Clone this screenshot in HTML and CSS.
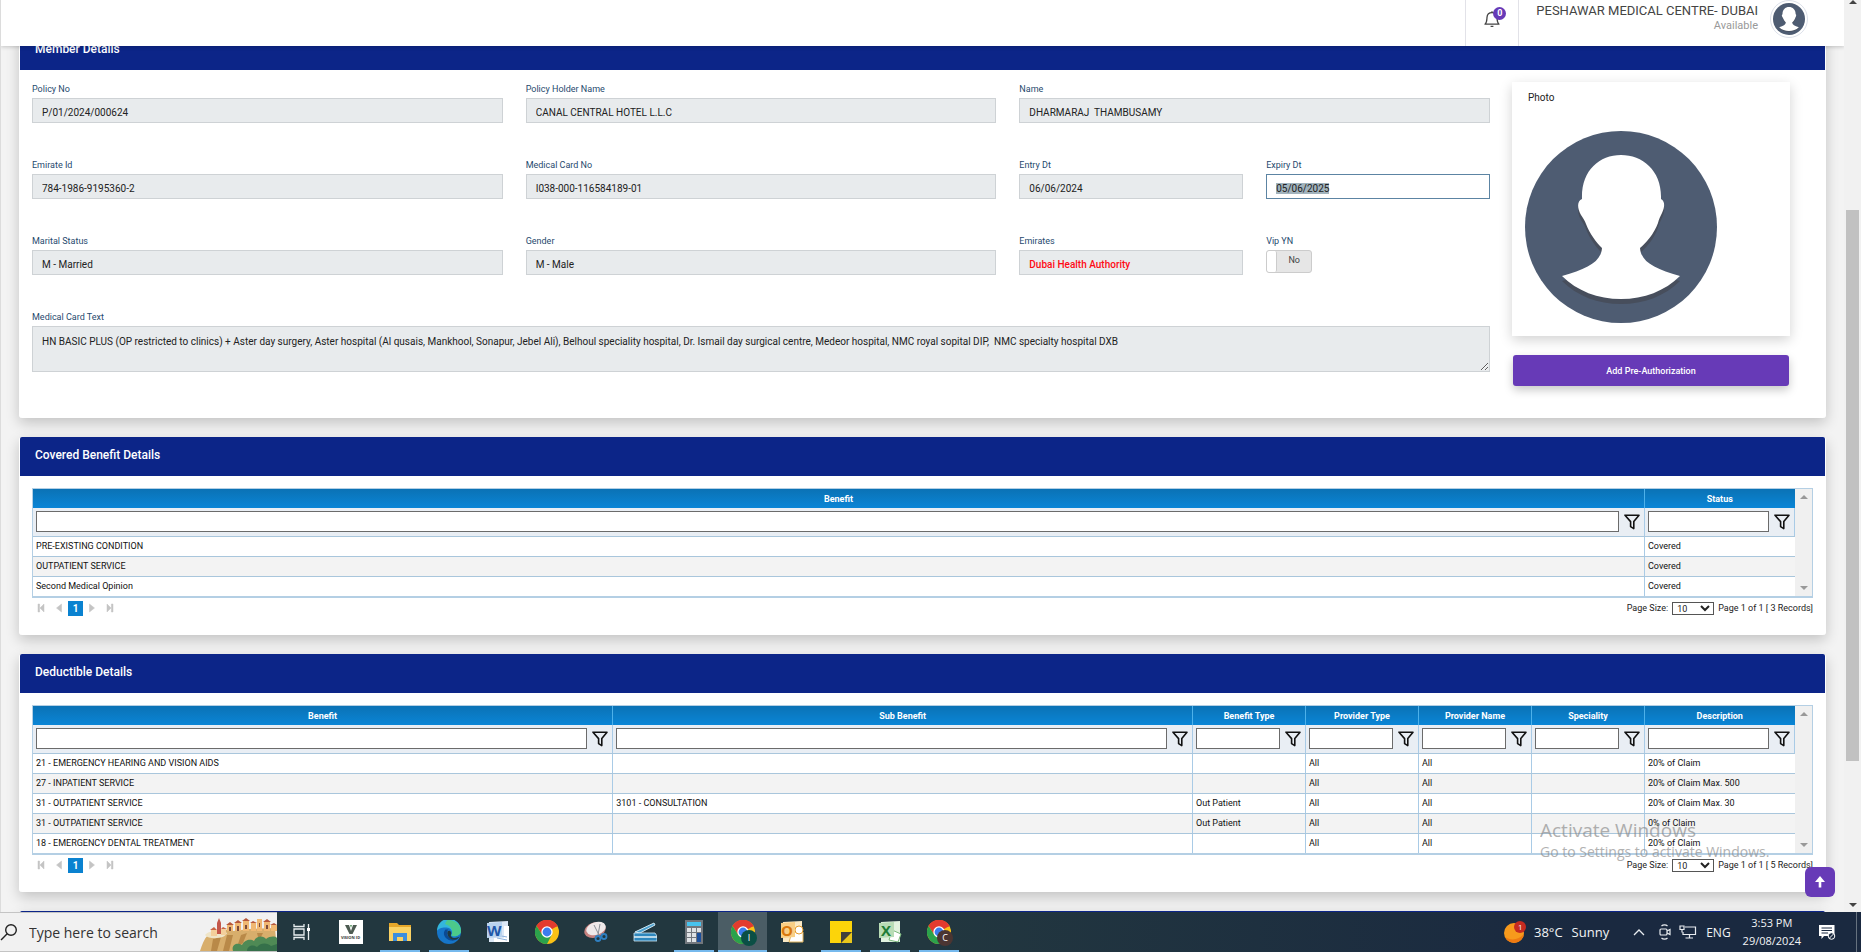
FILE: index.html
```html
<!DOCTYPE html>
<html lang="en">
<head>
<meta charset="utf-8">
<title>Member Details</title>
<link rel="stylesheet" href="styles.css">
</head>
<body>
<svg class="defs" aria-hidden="true">
  <symbol id="avatar" viewBox="0 0 192 192">
    <circle cx="96" cy="96" r="96" fill="#4e5c72"/>
    <path transform="translate(0 5)" fill="#474e5c" d="M57 68C56 40 74 24 96 24S137 40 136 68C140 70 140 76 137 82C135 86 134 88 133 92C129 103 121 112 115 117C116 131 130 138 155 145C140 160 119 168 96 168S52 160 37 145C62 138 76 131 77 117C71 111 65 103 61 93C60 90 58 87 56 84C52 77 52 70 57 68Z"/>
    <path fill="#fff" d="M57 68C56 40 74 24 96 24S137 40 136 68C140 70 140 76 137 82C135 86 134 88 133 92C129 103 121 112 115 117C116 131 130 138 155 145C140 160 119 168 96 168S52 160 37 145C62 138 76 131 77 117C71 111 65 103 61 93C60 90 58 87 56 84C52 77 52 70 57 68Z"/>
  </symbol>
  <symbol id="funnel" viewBox="0 0 16 16"><path d="M1 1.2H15L9.8 7.6V14.6L6.6 12.6V7.6Z" fill="none" stroke="#111" stroke-width="1.6" stroke-linejoin="round"/></symbol>
  <symbol id="chrome" viewBox="0 0 24 24">
    <circle cx="12" cy="12" r="12" fill="#fbc116"/>
    <path d="M12 12L1.6 6A12 12 0 0 1 22.4 6Z" fill="#e33b2e"/>
    <path d="M12 6.5H22.7A12 12 0 0 0 1.6 6L7.2 14.8Z" fill="#e33b2e"/>
    <path d="M1.6 6A12 12 0 0 0 12 24L16.8 14.8L7.2 14.8Z" fill="#2ba24c"/>
    <circle cx="12" cy="12" r="5.7" fill="#fff"/><circle cx="12" cy="12" r="4.4" fill="#3b7ded"/>
  </symbol>
  <symbol id="first" viewBox="0 0 8 10"><path d="M1 1H2.6V9H1ZM7 1V9L3 5Z" fill="#c4c4c4" stroke="#c4c4c4" stroke-width=".5"/></symbol>
  <symbol id="prev" viewBox="0 0 8 10"><path d="M6.5 1V9L1.5 5Z" fill="#c4c4c4" stroke="#c4c4c4" stroke-width=".5"/></symbol>
  <symbol id="next" viewBox="0 0 8 10"><path d="M1.5 1V9L6.5 5Z" fill="#c4c4c4" stroke="#c4c4c4" stroke-width=".5"/></symbol>
  <symbol id="last" viewBox="0 0 8 10"><path d="M7 1H5.4V9H7ZM1 1V9L5 5Z" fill="#c4c4c4" stroke="#c4c4c4" stroke-width=".5"/></symbol>
</svg>

<div class="window">
  <div class="page">
    <header class="topbar">
      <button class="bell" type="button" aria-label="Notifications">
        <svg width="16" height="18" viewBox="0 0 16 18" fill="none" stroke="#444" stroke-width="1.3"><path d="M1 14.2C3 12.6 2.8 10 3 7.4C3.2 4.6 5.2 2.7 8 2.7S12.8 4.6 13 7.4C13.2 10 13 12.6 15 14.2Z" stroke-linejoin="round"/><path d="M6.6 16.3H9.4M8 1.3V2.5"/></svg>
        <span class="badge">0</span>
      </button>
      <a class="account" href="#">
        <span class="account-text"><span class="account-name">PESHAWAR MEDICAL CENTRE- DUBAI</span><span class="account-state">Available</span></span>
        <span class="account-pic"><svg width="32" height="32"><use href="#avatar"/></svg></span>
      </a>
    </header>

    <main class="content">
      <section class="card">
        <h2 class="card-head">Member Details</h2>
        <div class="member">
          <form class="fields">
            <div class="field wide"><label for="policy">Policy No</label><input id="policy" value="P/01/2024/000624" readonly></div>
            <div class="field wide"><label for="holder">Policy Holder Name</label><input id="holder" value="CANAL CENTRAL HOTEL L.L.C" readonly></div>
            <div class="field wide"><label for="name">Name</label><input id="name" value="DHARMARAJ  THAMBUSAMY" readonly></div>
            <div class="field wide"><label for="eid">Emirate Id</label><input id="eid" value="784-1986-9195360-2" readonly></div>
            <div class="field wide"><label for="cardno">Medical Card No</label><input id="cardno" value="I038-000-116584189-01" readonly></div>
            <div class="field"><label for="entry">Entry Dt</label><input id="entry" value="06/06/2024" readonly></div>
            <div class="field"><label for="expiry">Expiry Dt</label><input id="expiry" class="active" value="05/06/2025"></div>
            <div class="field wide"><label for="marital">Marital Status</label><input id="marital" value="M - Married" readonly></div>
            <div class="field wide"><label for="gender">Gender</label><input id="gender" value="M - Male" readonly></div>
            <div class="field"><label for="emirates">Emirates</label><input id="emirates" class="alert" value="Dubai Health Authority" readonly></div>
            <div class="field"><label for="vip">Vip YN</label>
              <span class="toggle"><input id="vip" type="checkbox"><span class="knob"></span><span class="toggle-text">No</span></span>
            </div>
            <div class="field full"><label for="cardtext">Medical Card Text</label><textarea id="cardtext" readonly>HN BASIC PLUS (OP restricted to clinics) + Aster day surgery, Aster hospital (Al qusais, Mankhool, Sonapur, Jebel Ali), Belhoul speciality hospital, Dr. Ismail day surgical centre, Medeor hospital, NMC royal sopital DIP,  NMC specialty hospital DXB</textarea></div>
          </form>
          <aside class="side">
            <div class="photo"><span>Photo</span><svg width="192" height="192" role="img" aria-label="Photo"><use href="#avatar"/></svg></div>
            <button class="primary" type="button">Add Pre-Authorization</button>
          </aside>
        </div>
      </section>

      <section class="card">
        <h2 class="card-head">Covered Benefit Details</h2>
        <div class="grid-wrap">
          <div class="grid">
            <div class="grid-body">
            <table>
              <colgroup><col><col class="c-last"></colgroup>
              <thead>
                <tr><th>Benefit</th><th>Status</th></tr>
                <tr class="filters">
                  <td><div class="filter"><input aria-label="Filter Benefit"><button type="button" aria-label="Filter"><svg width="16" height="16"><use href="#funnel"/></svg></button></div></td>
                  <td><div class="filter"><input aria-label="Filter Status"><button type="button" aria-label="Filter"><svg width="16" height="16"><use href="#funnel"/></svg></button></div></td>
                </tr>
              </thead>
              <tbody>
                <tr><td>PRE-EXISTING CONDITION</td><td>Covered</td></tr>
                <tr><td>OUTPATIENT SERVICE</td><td>Covered</td></tr>
                <tr><td>Second Medical Opinion</td><td>Covered</td></tr>
              </tbody>
            </table>
            </div>
            <div class="gutter"><i class="up"></i><i class="down"></i></div>
          </div>
          <div class="pager">
            <button type="button" aria-label="First"><svg width="8" height="10"><use href="#first"/></svg></button>
            <button type="button" aria-label="Previous"><svg width="8" height="10"><use href="#prev"/></svg></button>
            <a class="current" href="#">1</a>
            <button type="button" aria-label="Next"><svg width="8" height="10"><use href="#next"/></svg></button>
            <button type="button" aria-label="Last"><svg width="8" height="10"><use href="#last"/></svg></button>
            <label for="size1">Page Size:</label><select id="size1"><option>10</option></select><span>Page 1 of 1 [ 3 Records]</span>
          </div>
        </div>
      </section>

      <section class="card">
        <h2 class="card-head">Deductible Details</h2>
        <div class="grid-wrap">
          <div class="grid">
            <div class="grid-body">
            <table>
              <colgroup><col><col><col class="c-mid"><col class="c-mid"><col class="c-mid"><col class="c-mid"><col class="c-last"></colgroup>
              <thead>
                <tr><th>Benefit</th><th>Sub Benefit</th><th>Benefit Type</th><th>Provider Type</th><th>Provider Name</th><th>Speciality</th><th>Description</th></tr>
                <tr class="filters">
                  <td><div class="filter"><input aria-label="Filter Benefit"><button type="button" aria-label="Filter"><svg width="16" height="16"><use href="#funnel"/></svg></button></div></td>
                  <td><div class="filter"><input aria-label="Filter Sub Benefit"><button type="button" aria-label="Filter"><svg width="16" height="16"><use href="#funnel"/></svg></button></div></td>
                  <td><div class="filter"><input aria-label="Filter Benefit Type"><button type="button" aria-label="Filter"><svg width="16" height="16"><use href="#funnel"/></svg></button></div></td>
                  <td><div class="filter"><input aria-label="Filter Provider Type"><button type="button" aria-label="Filter"><svg width="16" height="16"><use href="#funnel"/></svg></button></div></td>
                  <td><div class="filter"><input aria-label="Filter Provider Name"><button type="button" aria-label="Filter"><svg width="16" height="16"><use href="#funnel"/></svg></button></div></td>
                  <td><div class="filter"><input aria-label="Filter Speciality"><button type="button" aria-label="Filter"><svg width="16" height="16"><use href="#funnel"/></svg></button></div></td>
                  <td><div class="filter"><input aria-label="Filter Description"><button type="button" aria-label="Filter"><svg width="16" height="16"><use href="#funnel"/></svg></button></div></td>
                </tr>
              </thead>
              <tbody>
                <tr><td>21 - EMERGENCY HEARING AND VISION AIDS</td><td></td><td></td><td>All</td><td>All</td><td></td><td>20% of Claim</td></tr>
                <tr><td>27 - INPATIENT SERVICE</td><td></td><td></td><td>All</td><td>All</td><td></td><td>20% of Claim Max. 500</td></tr>
                <tr><td>31 - OUTPATIENT SERVICE</td><td>3101 - CONSULTATION</td><td>Out Patient</td><td>All</td><td>All</td><td></td><td>20% of Claim Max. 30</td></tr>
                <tr><td>31 - OUTPATIENT SERVICE</td><td></td><td>Out Patient</td><td>All</td><td>All</td><td></td><td>0% of Claim</td></tr>
                <tr><td>18 - EMERGENCY DENTAL TREATMENT</td><td></td><td></td><td>All</td><td>All</td><td></td><td>20% of Claim</td></tr>
              </tbody>
            </table>
            </div>
            <div class="gutter"><i class="up"></i><i class="down"></i></div>
          </div>
          <div class="pager">
            <button type="button" aria-label="First"><svg width="8" height="10"><use href="#first"/></svg></button>
            <button type="button" aria-label="Previous"><svg width="8" height="10"><use href="#prev"/></svg></button>
            <a class="current" href="#">1</a>
            <button type="button" aria-label="Next"><svg width="8" height="10"><use href="#next"/></svg></button>
            <button type="button" aria-label="Last"><svg width="8" height="10"><use href="#last"/></svg></button>
            <label for="size2">Page Size:</label><select id="size2"><option>10</option></select><span>Page 1 of 1 [ 5 Records]</span>
          </div>
        </div>
      </section>

      <section class="card"><div class="card-head"></div></section>
    </main>

    <div class="watermark"><p class="wm-title">Activate Windows</p><p class="wm-text">Go to Settings to activate Windows.</p></div>
    <a class="to-top" href="#" aria-label="Scroll to top"><svg width="12" height="14" viewBox="0 0 12 14"><path d="M6 1L11 7H7.3V12.5H4.7V7H1Z" fill="#fff"/></svg></a>
  </div>
  <div class="scrollbar"><i class="up"></i><span class="before"></span><span class="thumb"></span><span class="after"></span><i class="down"></i></div>
</div>

<footer class="taskbar">
  <label class="search">
    <svg width="18" height="18" viewBox="0 0 18 18" fill="none" stroke="#222" stroke-width="1.4"><circle cx="11" cy="7" r="5.3"/><path d="M7.2 10.8L1 17"/></svg>
    <input type="text" placeholder="Type here to search" aria-label="Search">
    <svg class="town" width="78" height="34" viewBox="0 0 78 34">
      <path d="M1 34C3 28 5 22 9 18L14 21L24 12L34 14L50 12L76 11L78 34Z" fill="#d8ae6c"/>
      <path d="M14 22L12 34H18L22 20ZM28 18L24 34H30L34 18ZM42 18L38 30L44 26L48 16ZM58 16L60 24L64 16Z" fill="#b98948"/>
      <path d="M6 18C10 13 24 12 28 16C26 22 10 23 6 18Z" fill="#efe5c8"/>
      <path d="M18 17V6L20 1L22 6V17Z" fill="#c4564a"/><path d="M12 13H18V19H12ZM22 12H27V18H22Z" fill="#f3cf9b"/><path d="M11 13L15 10L18 13ZM22 12L24 10L28 12Z" fill="#c96543"/>
      <path d="M28 8H34V14H28ZM36 6H42V14H36ZM44 4H50V14H44ZM52 6H57V14H52ZM58 2H63V14H58ZM65 5H71V14H65ZM72 8H78V14H72Z" fill="#f0b873"/>
      <path d="M27 8L31 5L35 8ZM35 6L39 3L43 6ZM43 4L47 1L51 4ZM51 6L54 4L58 6ZM64 5L68 2L72 5ZM71 8L75 6L78 8Z" fill="#b6573b"/>
      <path d="M30 10H32V14H30ZM38 9H40V14H38ZM46 8H48V12H46ZM60 6H61V10H60ZM67 8H69V12H67Z" fill="#7c4a3a"/>
      <path d="M34 34C32 28 38 25 43 28C46 22 52 22 55 24C58 18 65 19 67 22C71 19 76 19 78 21V34Z" fill="#4f8a55"/>
      <path d="M48 34C48 29 54 27 58 30C62 25 69 26 72 29L78 27V34Z" fill="#35704a"/>
    </svg>
  </label>

  <nav class="apps">
    <a href="#" aria-label="Task view"><svg width="20" height="18" viewBox="0 0 20 18" fill="none" stroke="#e8eef0" stroke-width="1.3"><path d="M2 1V3.5H12V1M2 17V14.5H12V17M2 6H12V12H2ZM16.5 1V17"/><path d="M15 5H18V8H15Z" fill="#fff" stroke="none"/></svg></a>
    <a href="#" aria-label="Vision ID" class="vision"><svg width="16" height="11" viewBox="0 0 16 11"><path d="M2 1H6L8 7L10 1H14L9.5 10H6.5Z" fill="#4d5b52"/><path d="M7 1H9L8 4Z" fill="#5c9a66"/></svg><span>VISION ID</span></a>
    <a href="#" class="open" aria-label="File Explorer"><svg width="24" height="24" viewBox="0 0 24 24"><path d="M1 3H9L11 5H23V21H1Z" fill="#e5a72a"/><path d="M1 7H23V21H1Z" fill="#fad264"/><path d="M5 21V13H19V21H15V17H9V21Z" fill="#3c8ede"/></svg></a>
    <a href="#" class="open" aria-label="Edge"><svg width="24" height="24" viewBox="0 0 24 24"><circle cx="12" cy="12" r="12" fill="#1675c8"/><path d="M0 11A12 12 0 0 1 24 10.5C24.4 16 17 17.5 14.3 15.5C16.5 12 14 8 9.5 7.6C5 7.2 1 9 0 11Z" fill="#33b6dc"/><path d="M10 0.2A12 12 0 0 1 24 10.5C24.4 16 17 17.5 14.3 15.5C16.5 12 15 6 8 4Z" fill="#4cc98a"/><path d="M8.5 9.5C5 13 7.500 19.500 14 20.500C17 21 20 20 22.500 17.600C19 21 9.500 19 10 12.500C10.100 11 10.700 10.200 11.500 9.500Z" fill="#0b4a94"/><path d="M10.500 11.500C12 9.500 15.300 11.500 14 14.500C13.400 16 14.500 18 18 18C20 18 22 17 22.700 16.300C21 20 17 20.500 14 19C11 17.500 9.800 14 10.500 11.500Z" fill="#22373f"/></svg></a>
    <a href="#" aria-label="Word"><svg width="24" height="24" viewBox="0 0 24 24"><path d="M3 2L22 1V22L3 22Z" fill="#dce8f6"/><path d="M18 6H23V22H8V18H18Z" fill="#fff"/><path d="M10 15L21 17M11 18L21 20" stroke="#8ab0dc"/><path d="M1 3L16 2V17L1 18Z" fill="#b9d2ee"/></svg><b class="glyph word">W</b></a>
    <a href="#" aria-label="Chrome"><svg width="24" height="24"><use href="#chrome"/></svg></a>
    <a href="#" aria-label="Snipping Tool"><svg width="24" height="24" viewBox="0 0 24 24"><ellipse cx="11" cy="10" rx="11" ry="7.5" transform="rotate(-18 11 10)" fill="#c7827f"/><ellipse cx="12" cy="8.5" rx="10" ry="6.3" transform="rotate(-18 12 8.5)" fill="#efe9ea"/><path d="M10 5L15 15M16 4L14 15" stroke="#8a8f96"/><g fill="none" stroke="#2f7fc0" stroke-width="1.8"><circle cx="14" cy="18.5" r="2.5"/><circle cx="20" cy="16.5" r="2.5"/></g></svg></a>
    <a href="#" aria-label="Scanner"><svg width="24" height="24" viewBox="0 0 24 24"><path d="M2 12L21 3L22 5L7 13Z" fill="#4ba0cf" stroke="#cfe6f2"/><path d="M1 13H22L24 16V21H1Z" fill="#2e87bd" stroke="#cfe6f2" stroke-width=".8"/><path d="M1 17H24" stroke="#e4f2f9" stroke-width="1.5"/></svg></a>
    <a href="#" class="open" aria-label="Calculator"><svg width="24" height="24" viewBox="0 0 24 24"><path d="M3 0H21V24H3Z" fill="#72777d"/><path d="M5 2H19V6H5Z" fill="#47c3ee"/><path d="M5 8H9V12H5ZM10 8H14V12H10ZM15 8H19V12H15ZM5 13H9V17H5ZM10 13H14V17H10ZM5 18H9V22H5ZM10 18H14V22H10Z" fill="#dfe2e5"/><path d="M15 13H19V22H15Z" fill="#1b4f9b"/></svg></a>
    <a href="#" class="open focus" aria-label="Chrome, profile I"><svg width="24" height="24"><use href="#chrome"/></svg><span class="profile green">I</span></a>
    <a href="#" aria-label="Outlook"><svg width="24" height="24" viewBox="0 0 24 24"><path d="M3 2L22 1V22H3Z" fill="#fbe9c4"/><path d="M12 12H23V22H9Z" fill="#fff" stroke="#e0b35c"/><circle cx="19" cy="10" r="4" fill="#fff" stroke="#e39a2c"/><path d="M1 3L15 2V17L1 18Z" fill="#f9cf85"/></svg><b class="glyph outlook">O</b></a>
    <a href="#" class="open" aria-label="Sticky Notes"><svg width="24" height="24" viewBox="0 0 24 24"><path d="M1 1H23V23H1Z" fill="#fcd40a"/><path d="M12 23V12H23V23Z" fill="#d8b400"/><path d="M12 23L23 12V23Z" fill="#e9c71c"/><path d="M12 23V12H23Z" fill="#3f3f3c"/></svg></a>
    <a href="#" class="open" aria-label="Excel"><svg width="24" height="24" viewBox="0 0 24 24"><path d="M3 2L22 1V22H3Z" fill="#e2f2df"/><path d="M14 10L23 14L20 22L11 20Z" fill="#fff" stroke="#7ab67b"/><path d="M1 3L16 2V17L1 18Z" fill="#b8dcb5"/></svg><b class="glyph excel">X</b></a>
    <a href="#" class="open" aria-label="Chrome, profile C"><svg width="24" height="24"><use href="#chrome"/></svg><span class="profile brown">C</span></a>
  </nav>

  <div class="tray">
    <span class="weather"><svg width="24" height="24" viewBox="0 0 24 24"><circle cx="11" cy="13" r="10" fill="#f79a1c"/><path d="M2 17A10 10 0 0 0 21 14C16 20 8 21 2 17Z" fill="#ee7a12"/><circle cx="17" cy="7" r="6" fill="#c52b20"/></svg><b>1</b></span>
    <span class="temp">38°C</span><span class="sky">Sunny</span>
    <svg width="12" height="8" viewBox="0 0 12 8" fill="none" stroke="#e8ecf0" stroke-width="1.3"><path d="M1 7L6 2L11 7"/></svg>
    <svg class="cam" width="12" height="16" viewBox="0 0 12 16" fill="none" stroke="#e8ecf0" stroke-width="1.2"><path d="M2.5 2C4 0.6 7 0.6 8.5 2M2.5 14C4 15.4 7 15.4 8.5 14"/><rect x="1" y="5" width="7" height="6" rx="1"/><path d="M8 7L11 5.5V10.5L8 9"/></svg>
    <svg width="18" height="14" viewBox="0 0 18 14" fill="none" stroke="#e8ecf0" stroke-width="1.2"><path d="M6 2H16.5V9.5H4V7M10.5 9.5V12.5M6.5 13H14"/><path d="M1 1H5V4.5H1ZM3 4.5V7.5"/></svg>
    <span class="lang">ENG</span>
    <time class="clock"><span>3:53 PM</span><span>29/08/2024</span></time>
    <svg width="17" height="17" viewBox="0 0 17 17"><path d="M0 1H15.5V12H5L2.5 15V12H0Z" fill="#fff"/><path d="M2.5 4H13M2.5 6.5H13M2.5 9H9" stroke="#1a2940"/><circle cx="12.5" cy="12" r="3.3" fill="#1a2940" stroke="#fff"/><path d="M10.5 14L14.5 10" stroke="#fff"/></svg>
  </div>
</footer>
<script src="script.js"></script>
</body>
</html>
```
FILE: styles.css
```css
* { box-sizing: border-box; }
body { margin: 0; height: 100vh; overflow: hidden; display: flex; flex-direction: column; font-family: Roboto, "Liberation Sans", sans-serif; font-size: 10px; color: #222; background: #f2f2f2; }
input, textarea, select, button { font: inherit; color: inherit; margin: 0; }
button { border: 0; background: none; padding: 0; }
a { color: inherit; text-decoration: none; }
p, h2 { margin: 0; }
svg { display: block; }
.defs { position: absolute; width: 0; height: 0; }

.window { flex: 1; min-height: 0; display: flex; }
.page { flex: 1; min-width: 0; position: relative; overflow: hidden; border-left: 1px solid #dcdcdc; background: #f3f3f3; }

.topbar { position: relative; z-index: 2; height: 46px; margin-bottom: -15px; display: flex; justify-content: flex-end; background: #fff; box-shadow: 0 1px 4px rgba(0,0,0,.2); }
.bell { position: relative; width: 54px; padding: 10px 0 0 18px; border: solid #e2e2e8; border-width: 0 1px; display: flex; align-items: flex-start; }
.badge { position: absolute; left: 27px; top: 7px; width: 13px; height: 13px; border-radius: 50%; background: #673ab7; color: #fff; font-size: 9px; line-height: 13px; font-weight: 700; text-align: center; }
.account { display: flex; align-items: flex-start; padding-right: 36px; }
.account-text { display: flex; flex-direction: column; align-items: flex-end; padding: 3px 12px 0 17px; }
.account-name { font-size: 13px; line-height: 16px; color: #444; }
.account-state { font-size: 11px; line-height: 14px; color: #999; }
.account-pic { border: 1px solid #dde1ea; border-radius: 50%; padding: 2px; }

.content { display: flex; flex-direction: column; gap: 19px; padding: 0 18px; }
.card { background: #fff; border: 0 solid #fff; border-width: 0 1px; border-radius: 3px; box-shadow: 0 5px 14px rgba(0,0,0,.2); }
.card-head { height: 39px; padding: 10px 15px; border-radius: 2px 2px 0 0; background: #0c2588; color: #fff; font-size: 12px; line-height: 17px; font-weight: 500; }

.member { display: flex; gap: 22px; padding: 12px 35px 32px 12px; }
.fields { flex: 1; display: grid; grid-template-columns: repeat(6, 1fr); column-gap: 23px; align-content: start; }
.field { grid-column: span 1; height: 76px; display: flex; flex-direction: column; align-items: flex-start; }
.wide { grid-column: span 2; }
.full { grid-column: 1 / -1; }
.field label { height: 16px; line-height: 14px; font-size: 9px; color: #1f4a6e; }
.field > input, .field textarea { width: 100%; height: 25px; padding: 4px 9px 0; border: 1px solid #ced2d5; border-radius: 0; background: #e8ebed; font-size: 10px; color: #222; outline: 0; }
.field textarea { height: 46px; padding-top: 7px; line-height: 16px; resize: vertical; overflow: hidden; }
.field > .active { background: #fff; border-color: #5c84a3; }
.active::selection { background: rgba(160,178,188,.99); color: #222; }
.field > .alert { color: #ff0a14; font-weight: 500; }
.toggle { position: relative; display: flex; width: 46px; height: 23px; border: 1px solid #ccc; border-radius: 3px; background: #e6e6e6; overflow: hidden; }
.toggle input { position: absolute; inset: 0; width: 100%; height: 100%; opacity: 0; }
.knob { width: 10px; background: #fff; border-right: 1px solid #ccc; border-radius: 2px; }
.toggle-text { flex: 1; text-align: center; line-height: 18px; font-size: 9px; color: #444; }

.side { width: 278px; }
.photo { height: 254px; padding: 8px 13px 0; background: #fff; box-shadow: 0 4px 12px rgba(0,0,0,.18); }
.photo span { display: block; padding-left: 3px; height: 41px; line-height: 16px; }
.primary { display: block; width: 276px; height: 31px; margin: 19px 1px 0; border-radius: 3px; background: #673ab7; color: #fff; font-size: 9px; font-weight: 500; box-shadow: 0 4px 10px rgba(0,0,0,.22); }

.grid-wrap { padding: 12px 12px 17px; }
.grid { display: flex; border: 1px solid #b4cfe4; border-bottom-width: 2px; }
.grid-body { flex: 1; min-width: 0; }
.grid table { width: 100%; table-layout: fixed; border-collapse: collapse; font-size: 9px; color: #111; }
.c-mid { width: 113px; }
.c-last { width: 150px; }
.grid th { height: 19px; padding: 0; background: linear-gradient(#0b72b5, #0a85d6); color: #fff; font-weight: 700; border-right: 1px solid #4db1ea; }
.grid td { height: 20px; padding: 0 3px; border-right: 1px solid #a9cbe6; border-bottom: 1px solid #a9c6dc; overflow: hidden; white-space: nowrap; }
.grid th:last-child, .grid tbody td:last-child { border-right: 0; }
.grid tbody tr:nth-child(even) { background: #f3f3f3; }
.grid tbody tr:last-child td { border-bottom: 0; }
.grid .filters td { height: 28px; background: #e9eef4; }
.filter { display: flex; align-items: center; }
.filter input { flex: 1; min-width: 0; height: 21px; border: 1px solid #6b6b6b; background: #fff; }
.filter button { margin: 0 1px 0 5px; }
.gutter { width: 17px; padding: 6px 0; background: #f0f0f0; display: flex; flex-direction: column; justify-content: space-between; align-items: center; }
.up, .down { border: 4px solid transparent; border-top: 0; border-bottom: 4px solid #999; }
.down { border-bottom: 0; border-top: 4px solid #999; }

.pager { display: flex; align-items: center; height: 20px; font-size: 9px; }
.pager button { margin: 0 5px; }
.pager .current { width: 15px; height: 15px; background: #0a82d0; color: #fff; font-size: 10px; font-weight: 700; line-height: 15px; text-align: center; }
.pager label { margin-left: auto; }
.pager select { width: 42px; height: 13px; margin: 0 4px; padding: 0; border: 1px solid #555; border-radius: 0; background: #fff; }

.watermark { position: absolute; left: 1539px; top: 817px; z-index: 3; color: #888; opacity: .65; font-family: "Open Sans", sans-serif; pointer-events: none; white-space: nowrap; }
.wm-title { font-size: 19px; line-height: 26px; }
.wm-text { font-size: 14px; line-height: 18px; }
.to-top { position: absolute; right: 9px; bottom: 15px; z-index: 4; width: 30px; height: 30px; border-radius: 6px; background: #673ab7; display: grid; place-items: center; }

.scrollbar { width: 17px; padding: 0 2px 5px; background: #f1f1f1; display: flex; flex-direction: column; align-items: center; }
.scrollbar .up { border-bottom-color: #444; }
.scrollbar .down { border-top-color: #444; }
.before { flex: 206; }
.thumb { flex: 551; width: 100%; background: #c1c1c1; }
.after { flex: 142; }

.taskbar { height: 40px; display: flex; background: linear-gradient(90deg, #22373f 50%, #1a2940 85%); color: #f2f4f6; font-family: "Open Sans", "Noto Sans", sans-serif; font-size: 12px; }
.search { width: 277px; display: flex; align-items: center; background: #f1f1f1; border: solid #c4c4c4; border-width: 1px 0; }
.search input { flex: 1; min-width: 0; padding: 0 0 0 11px; border: 0; background: none; font-size: 14px; outline: 0; }
.search input::placeholder { color: #333; opacity: 1; }
.town { align-self: flex-end; }
.apps { display: flex; }
.apps a { position: relative; width: 49px; display: grid; place-items: center; }
.apps .open::after { content: ""; position: absolute; left: 5px; right: 4px; bottom: 0; height: 2px; background: #76b9ed; }
.apps .focus { background: #4b5d65; }
.apps .focus::after { left: 0; right: 0; }
.apps .vision { align-content: center; }
.vision::before { content: ""; position: absolute; width: 24px; height: 24px; background: #fff; }
.vision svg, .vision span { position: relative; }
.vision span { font-size: 4px; line-height: 6px; font-weight: 700; color: #333; }
.glyph { position: absolute; left: 14px; top: 8px; font-size: 15px; line-height: 20px; }
.word { color: #1f57a8; }
.outlook { color: #d9780c; }
.excel { color: #1f7d37; left: 16px; }
.profile { position: absolute; left: 23px; top: 18px; width: 16px; height: 16px; border-radius: 50%; color: #fff; font-size: 9px; line-height: 16px; text-align: center; }
.green { background: #0b4f45; }
.brown { background: #4b3532; }

.tray { margin-left: auto; display: flex; align-items: center; margin-right: 4px; padding-right: 20px; border-right: 1px solid #66727f; font-size: 13px; }
.weather { position: relative; margin-right: 7px; }
.weather b { position: absolute; left: 15px; top: 2px; font-size: 8px; line-height: 10px; font-weight: 400; }
.temp { margin-right: 9px; }
.sky { margin-right: 24px; }
.cam { margin: 0 8px 0 14px; }
.lang { font-size: 12px; margin: 0 12px 0 9px; }
.clock { display: flex; flex-direction: column; align-items: center; font-size: 11px; line-height: 18px; margin-right: 18px; }
```
FILE: script.js
```js
const expiry = document.getElementById("expiry");
expiry.focus();
expiry.select();
```
